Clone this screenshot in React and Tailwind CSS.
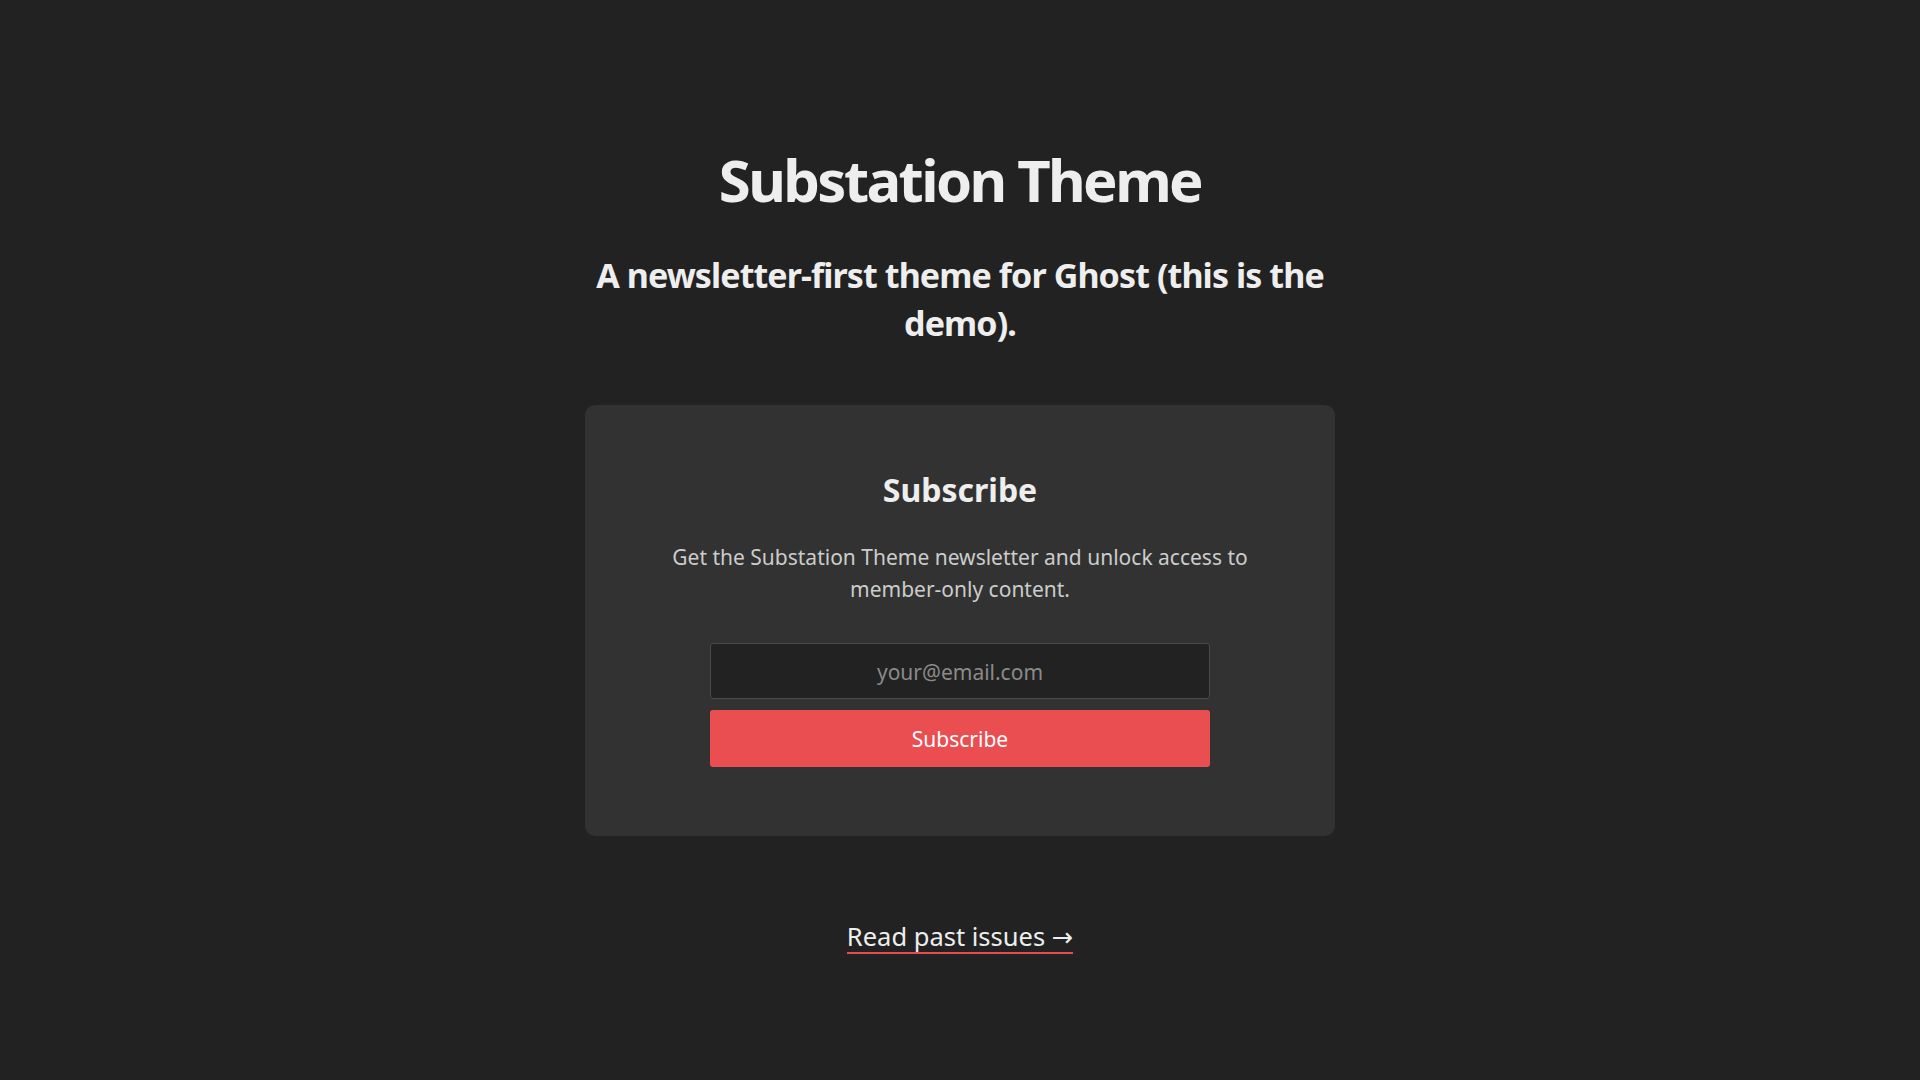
import React from "react";

const App = () => {
  return (
    <main
      className="min-h-screen w-full bg-[#222222] text-[#eeeeee] flex flex-col items-center pt-[145px] pb-24"
      style={{ fontFamily: '"Noto Sans", "Open Sans", sans-serif' }}
    >
      {/* Header */}
      <h1 className="text-[58px] leading-[70px] font-bold tracking-[-2.6px] text-center">
        Substation Theme
      </h1>
      <h2 className="mt-[36px] max-w-[740px] text-[34px] leading-[48px] font-bold tracking-[-0.9px] text-center">
        A newsletter-first theme for Ghost (this is the demo).
      </h2>

      {/* Subscribe card */}
      <section className="mt-[58px] w-[750px] bg-[#323232] rounded-[10px] pt-[65px] pb-[69px] flex flex-col items-center">
        <h3 className="text-[32px] leading-[40px] font-bold text-center">
          Subscribe
        </h3>
        <p className="mt-[31px] max-w-[600px] text-[21px] leading-[32px] text-[#cccccc] text-center">
          Get the Substation Theme newsletter and unlock access to member-only
          content.
        </p>
        <form
          className="mt-[38px] w-[500px] flex flex-col gap-[11px]"
          onSubmit={(e) => e.preventDefault()}
        >
          <input
            type="email"
            placeholder="your@email.com"
            className="h-[56px] w-full rounded-[3px] border border-[#4a4a4a] bg-[#222222] px-4 pt-[2px] text-center text-[21px] text-[#eeeeee] placeholder:text-[#8a8a8a] outline-none"
          />
          <button
            type="submit"
            className="h-[57px] w-full rounded-[3px] bg-[#ea4e51] pt-[3px] text-[21px] text-white"
          >
            Subscribe
          </button>
        </form>
      </section>

      {/* Archive link */}
      <a
        href="#"
        className="mt-[85px] inline-block border-b-2 border-[#e84c4f] text-[25.5px] leading-[30px] text-[#eeeeee]"
      >
        Read past issues{" "}
        <span style={{ fontFamily: '"DejaVu Sans", sans-serif' }}>→</span>
      </a>
    </main>
  );
};

export default App;
